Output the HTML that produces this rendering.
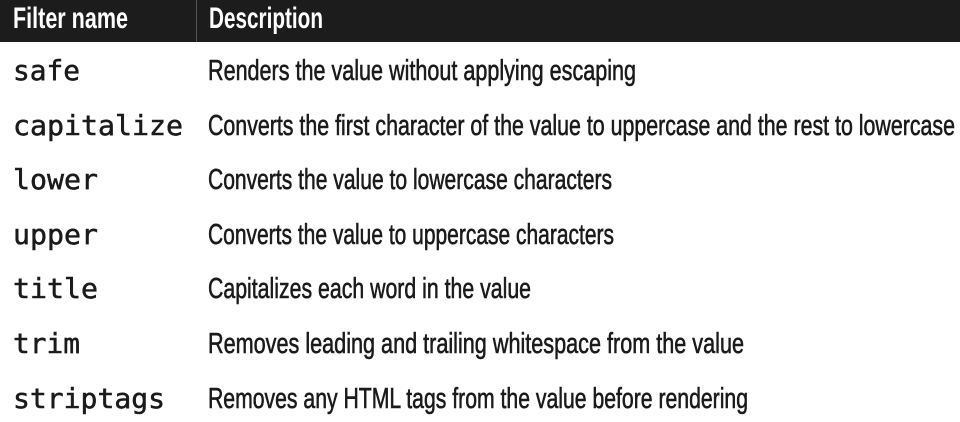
<!DOCTYPE html>
<html><head><style>body{margin:0;background:#fff}svg{display:block}</style></head><body>
<svg width="960" height="422" xmlns="http://www.w3.org/2000/svg">
<rect width="960" height="42" fill="#1c1c1c"/>
<rect x="196" y="0" width="1" height="42" fill="#555"/>
<g font-family="Liberation Sans Narrow, Liberation Sans, sans-serif" font-weight="bold" font-size="30" fill="#fff">
<text x="13" y="28" textLength="115" lengthAdjust="spacingAndGlyphs">Filter name</text>
<text x="209" y="28" textLength="114" lengthAdjust="spacingAndGlyphs">Description</text>
</g>
<g font-family="DejaVu Sans Mono, Liberation Mono, monospace" font-size="28" fill="#1a1a1a" stroke="#1a1a1a" stroke-width="0.5">
<text x="13" y="80" textLength="67" lengthAdjust="spacingAndGlyphs">safe</text>
<text x="13" y="135" textLength="170" lengthAdjust="spacingAndGlyphs">capitalize</text>
<text x="13" y="189" textLength="85" lengthAdjust="spacingAndGlyphs">lower</text>
<text x="13" y="244" textLength="85" lengthAdjust="spacingAndGlyphs">upper</text>
<text x="13" y="298" textLength="85" lengthAdjust="spacingAndGlyphs">title</text>
<text x="13" y="353" textLength="67" lengthAdjust="spacingAndGlyphs">trim</text>
<text x="13" y="408" textLength="152" lengthAdjust="spacingAndGlyphs">striptags</text>
</g>
<g font-family="Liberation Sans Narrow, Liberation Sans, sans-serif" font-size="29" fill="#1a1a1a" stroke="#1a1a1a" stroke-width="0.6">
<text x="208" y="80" textLength="428" lengthAdjust="spacingAndGlyphs">Renders the value without applying escaping</text>
<text x="208" y="135" textLength="747" lengthAdjust="spacingAndGlyphs">Converts the first character of the value to uppercase and the rest to lowercase</text>
<text x="208" y="189" textLength="404" lengthAdjust="spacingAndGlyphs">Converts the value to lowercase characters</text>
<text x="208" y="244" textLength="406" lengthAdjust="spacingAndGlyphs">Converts the value to uppercase characters</text>
<text x="208" y="298" textLength="323" lengthAdjust="spacingAndGlyphs">Capitalizes each word in the value</text>
<text x="208" y="353" textLength="536" lengthAdjust="spacingAndGlyphs">Removes leading and trailing whitespace from the value</text>
<text x="208" y="408" textLength="540" lengthAdjust="spacingAndGlyphs">Removes any HTML tags from the value before rendering</text>
</g>
</svg>
</body></html>
